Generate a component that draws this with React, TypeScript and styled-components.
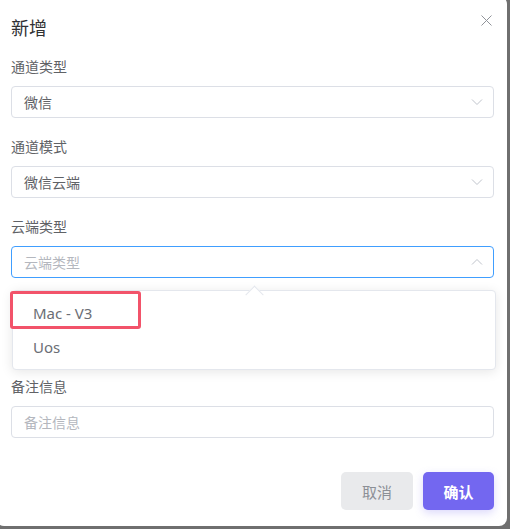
import React from 'react'
import styled, { createGlobalStyle } from 'styled-components'

const GlobalStyle = createGlobalStyle`
  html, body {
    margin: 0;
    padding: 0;
    background: #6f6f6f;
    overflow: hidden;
  }
  body {
    font-family: "Noto Sans", "Noto Sans CJK SC", sans-serif;
  }
`

const Chevron = ({ up }: { up?: boolean }) => (
  <svg width="12" height="8" viewBox="0 0 12 8" fill="none">
    {up ? (
      <path d="M1 6.5 L6 1.5 L11 6.5" stroke="#c0c4cc" strokeWidth="1" />
    ) : (
      <path d="M1 1.5 L6 6.5 L11 1.5" stroke="#c0c4cc" strokeWidth="1" />
    )}
  </svg>
)

const options = ['Mac - V3', 'Uos']

const App: React.FC = () => {
  return (
    <>
      <GlobalStyle />
      <Dialog>
        <Header>
          <Title>新增</Title>
          <Close aria-label="close">
            <svg width="11" height="11" viewBox="0 0 11 11">
              <path d="M0.5 0.5 L10.5 10.5 M10.5 0.5 L0.5 10.5" stroke="#909399" strokeWidth="1" />
            </svg>
          </Close>
        </Header>

        <Form>
          <Item>
            <Label>通道类型</Label>
            <Select>
              <Value>微信</Value>
              <Chevron />
            </Select>
          </Item>

          <Item>
            <Label>通道模式</Label>
            <Select>
              <Value>微信云端</Value>
              <Chevron />
            </Select>
          </Item>

          <Item>
            <Label>云端类型</Label>
            <SelectWrap>
              <Select focused>
                <Value placeholder>云端类型</Value>
                <Chevron up />
              </Select>
              <Dropdown>
                <Arrow />
                {options.map((o, i) => (
                  <Option key={o}>
                    {o}
                    {i === 0 && <Highlight />}
                  </Option>
                ))}
              </Dropdown>
            </SelectWrap>
          </Item>

          {/* row hidden under the open dropdown */}
          <Item />

          <Item>
            <Label>备注信息</Label>
            <Select>
              <Value placeholder>备注信息</Value>
            </Select>
          </Item>
        </Form>

        <Footer>
          <Button>取消</Button>
          <Button primary>确认</Button>
        </Footer>
      </Dialog>
    </>
  )
}

export default App

const Dialog = styled.div`
  margin: -4px 0 0 -4px;
  width: 511px;
  height: 530px;
  box-sizing: border-box;
  padding: 0 13px 0 15px;
  background: #ffffff;
  border-radius: 8px;
  display: flex;
  flex-direction: column;
`

const Header = styled.div`
  display: flex;
  justify-content: space-between;
  align-items: flex-start;
  padding-top: 20px;
  height: 61px;
  box-sizing: border-box;
`

const Title = styled.div`
  font-size: 18px;
  line-height: 24px;
  color: #303133;
`

const Close = styled.div`
  margin-top: -1px;
  margin-right: 2px;
  width: 11px;
  height: 11px;
  display: flex;
`

const Form = styled.div`
  display: flex;
  flex-direction: column;
`

const Item = styled.div`
  display: flex;
  flex-direction: column;
  height: 80px;
`

const Label = styled.div`
  font-size: 14px;
  line-height: 20px;
  height: 20px;
  color: #606266;
  margin-bottom: 9px;
`

const SelectWrap = styled.div`
  position: relative;
  z-index: 2;
`

const Select = styled.div<{ focused?: boolean }>`
  height: 32px;
  box-sizing: border-box;
  border: 1px solid ${(p) => (p.focused ? '#409eff' : '#dcdfe6')};
  border-radius: 4px;
  padding: 0 10px 0 12px;
  display: flex;
  align-items: center;
  justify-content: space-between;
  background: #fff;
`

const Value = styled.span<{ placeholder?: boolean }>`
  font-size: 14px;
  color: ${(p) => (p.placeholder ? '#b4b7be' : '#606266')};
`

const Dropdown = styled.div`
  position: absolute;
  top: 44px;
  left: 1px;
  right: -2px;
  background: #fff;
  border: 1px solid #e4e7ed;
  border-radius: 4px;
  box-shadow: 0 2px 12px rgba(0, 0, 0, 0.1);
  padding: 5px 0;
  box-sizing: border-box;
`

const Arrow = styled.div`
  position: absolute;
  top: -7px;
  left: 235px;
  width: 12px;
  height: 12px;
  background: #fff;
  border-left: 1px solid #e4e7ed;
  border-top: 1px solid #e4e7ed;
  transform: rotate(45deg) translate(3px, 3px);
`

const Option = styled.div`
  position: relative;
  height: 34px;
  line-height: 34px;
  padding-left: 20px;
  font-size: 15px;
  color: #6b6e75;
`

const Highlight = styled.div`
  position: absolute;
  left: -3px;
  top: -5px;
  width: 131px;
  height: 38px;
  box-sizing: border-box;
  border: 3px solid #f2536a;
  border-radius: 3px;
`

const Footer = styled.div`
  display: flex;
  justify-content: flex-end;
  gap: 10px;
  margin-top: 15px;
`

const Button = styled.div<{ primary?: boolean }>`
  width: ${(p) => (p.primary ? '71px' : '72px')};
  height: 38px;
  border-radius: 5px;
  display: flex;
  align-items: center;
  justify-content: center;
  font-size: 15px;
  font-weight: ${(p) => (p.primary ? 700 : 400)};
  color: ${(p) => (p.primary ? '#ffffff' : '#8c8f96')};
  background: ${(p) => (p.primary ? '#7367f0' : '#e9eaec')};
  box-shadow: ${(p) => (p.primary ? '0 3px 8px rgba(115, 103, 240, 0.25)' : 'none')};
`
